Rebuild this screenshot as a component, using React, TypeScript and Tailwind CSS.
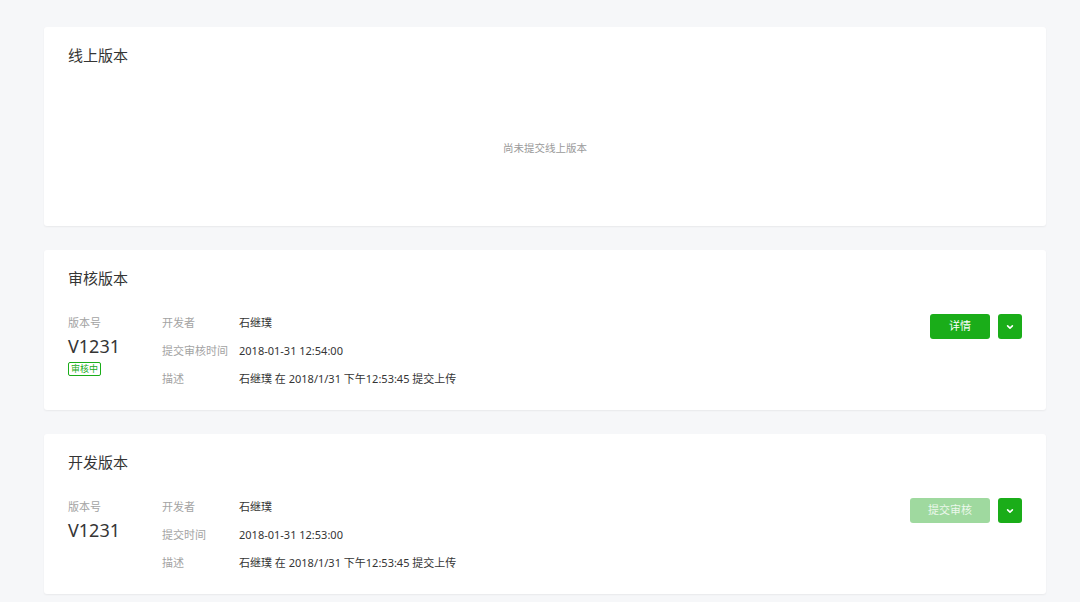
import { ReactNode } from 'react';

const FONT = { fontFamily: '"Noto Sans", "Noto Sans CJK SC", sans-serif' };

type Row = { label: string; value: string };

const Chevron = () => (
  <svg width="10" height="10" viewBox="0 0 10 10" fill="none">
    <path d="M2.6 3.9 L5 6.2 L7.4 3.9" stroke="white" strokeWidth="1.6" strokeLinecap="round" strokeLinejoin="round" />
  </svg>
);

const Card = ({ title, children, className }: { title: string; children: ReactNode; className?: string }) => (
  <section className={`bg-white rounded-[3px] shadow-[0_1px_2px_rgba(0,0,0,0.06)] px-6 pt-[18px] ${className ?? ''}`}>
    <h2 className="text-[15px] leading-5 text-[#353535]">{title}</h2>
    {children}
  </section>
);

const VersionCard = ({
  title,
  rows,
  badge,
  action,
  disabled,
}: {
  title: string;
  rows: Row[];
  badge?: string;
  action: string;
  disabled?: boolean;
}) => (
  <Card title={title} className="pb-[21px]">
    <div className="flex mt-[25px]">
      {/* version */}
      <div className="w-[94px] shrink-0">
        <div className="text-[11px] leading-5 text-[#a3a3a3]">版本号</div>
        <div className="text-[18px] leading-6 text-[#353535] mt-[1px]">V1231</div>
        {badge && (
          <span className="block w-fit mt-1 border border-[#1aad19] rounded-[2px] text-[#1aad19] text-[9px] leading-3 px-[2px]">
            {badge}
          </span>
        )}
      </div>

      {/* info rows */}
      <div className="flex-1 flex flex-col gap-2">
        {rows.map(({ label, value }, index) => (
          <div key={index} className="flex text-[11px] leading-5">
            <span className="w-[77px] shrink-0 text-[#a3a3a3] whitespace-nowrap">{label}</span>
            <span className="text-[#353535]">{value}</span>
          </div>
        ))}
      </div>

      {/* actions */}
      <div className="flex items-start gap-2 mt-[1px]">
        <button
          className={
            disabled
              ? 'h-[25px] w-20 rounded-[3px] bg-[#9fd99f] text-white/80 text-[11px]'
              : 'h-[25px] w-[60px] rounded-[3px] bg-[#1aad19] text-white text-[11px]'
          }
        >
          {action}
        </button>
        <button className="h-[25px] w-6 rounded-[3px] bg-[#1aad19] flex items-center justify-center">
          <Chevron />
        </button>
      </div>
    </div>
  </Card>
);

export default function App() {
  return (
    <div className="min-h-screen bg-[#f6f7f9] pt-[27px] pl-11 pr-[34px] pb-6 flex flex-col gap-6" style={FONT}>
      <Card title="线上版本" className="h-[199px]">
        <div className="h-[161px] flex items-center justify-center">
          <span className="text-[10.5px] text-[#9a9a9a] mt-[6px]">尚未提交线上版本</span>
        </div>
      </Card>

      <VersionCard
        title="审核版本"
        badge="审核中"
        action="详情"
        rows={[
          { label: '开发者', value: '石继璞' },
          { label: '提交审核时间', value: '2018-01-31 12:54:00' },
          { label: '描述', value: '石继璞 在 2018/1/31 下午12:53:45 提交上传' },
        ]}
      />

      <VersionCard
        title="开发版本"
        action="提交审核"
        disabled
        rows={[
          { label: '开发者', value: '石继璞' },
          { label: '提交时间', value: '2018-01-31 12:53:00' },
          { label: '描述', value: '石继璞 在 2018/1/31 下午12:53:45 提交上传' },
        ]}
      />
    </div>
  );
}
